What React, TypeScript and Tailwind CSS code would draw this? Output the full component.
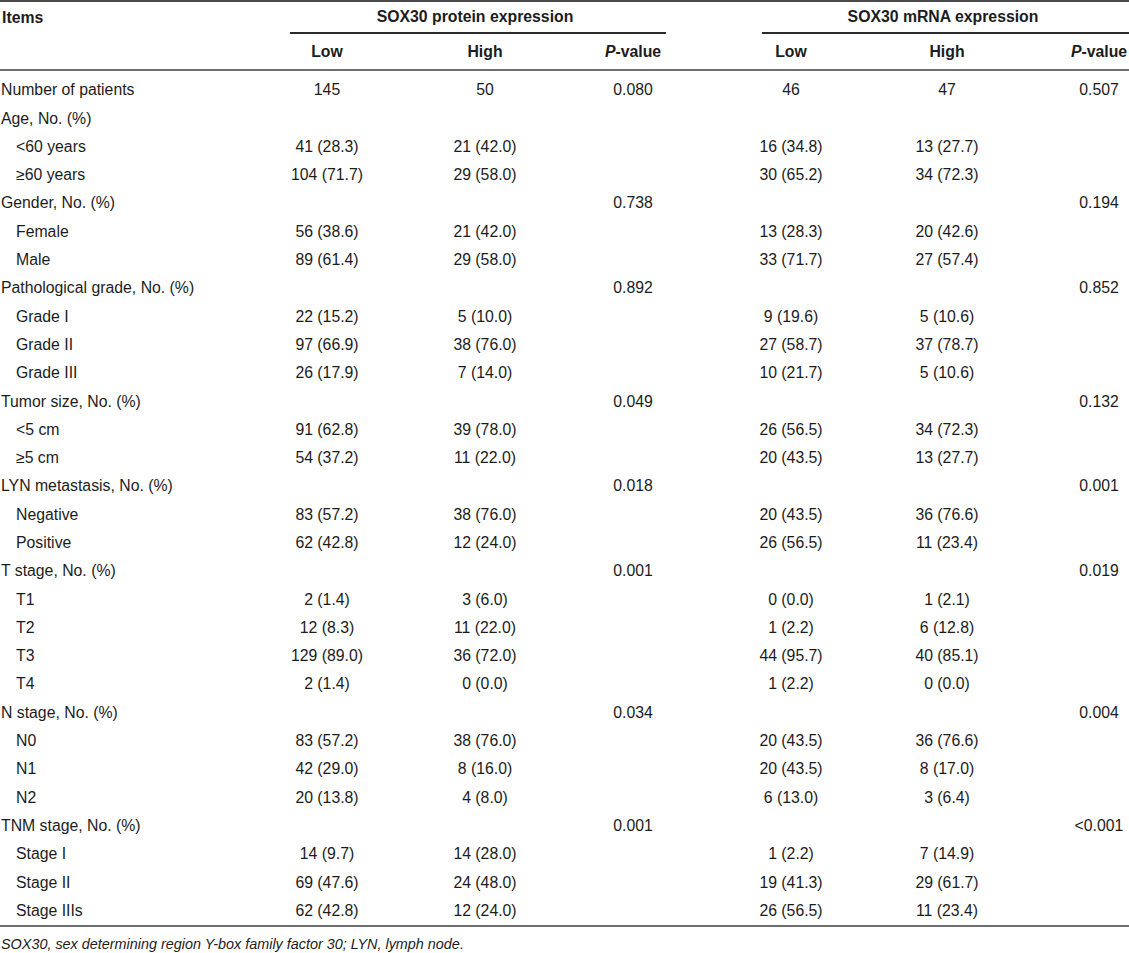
import React from 'react';

type Row = [string, string, string, string, string, string, string];

const rows: Row[] = [
  ['Number of patients', '145', '50', '0.080', '46', '47', '0.507'],
  ['Age, No. (%)', '', '', '', '', '', ''],
  ['<60 years', '41 (28.3)', '21 (42.0)', '', '16 (34.8)', '13 (27.7)', ''],
  ['≥60 years', '104 (71.7)', '29 (58.0)', '', '30 (65.2)', '34 (72.3)', ''],
  ['Gender, No. (%)', '', '', '0.738', '', '', '0.194'],
  ['Female', '56 (38.6)', '21 (42.0)', '', '13 (28.3)', '20 (42.6)', ''],
  ['Male', '89 (61.4)', '29 (58.0)', '', '33 (71.7)', '27 (57.4)', ''],
  ['Pathological grade, No. (%)', '', '', '0.892', '', '', '0.852'],
  ['Grade I', '22 (15.2)', '5 (10.0)', '', '9 (19.6)', '5 (10.6)', ''],
  ['Grade II', '97 (66.9)', '38 (76.0)', '', '27 (58.7)', '37 (78.7)', ''],
  ['Grade III', '26 (17.9)', '7 (14.0)', '', '10 (21.7)', '5 (10.6)', ''],
  ['Tumor size, No. (%)', '', '', '0.049', '', '', '0.132'],
  ['<5 cm', '91 (62.8)', '39 (78.0)', '', '26 (56.5)', '34 (72.3)', ''],
  ['≥5 cm', '54 (37.2)', '11 (22.0)', '', '20 (43.5)', '13 (27.7)', ''],
  ['LYN metastasis, No. (%)', '', '', '0.018', '', '', '0.001'],
  ['Negative', '83 (57.2)', '38 (76.0)', '', '20 (43.5)', '36 (76.6)', ''],
  ['Positive', '62 (42.8)', '12 (24.0)', '', '26 (56.5)', '11 (23.4)', ''],
  ['T stage, No. (%)', '', '', '0.001', '', '', '0.019'],
  ['T1', '2 (1.4)', '3 (6.0)', '', '0 (0.0)', '1 (2.1)', ''],
  ['T2', '12 (8.3)', '11 (22.0)', '', '1 (2.2)', '6 (12.8)', ''],
  ['T3', '129 (89.0)', '36 (72.0)', '', '44 (95.7)', '40 (85.1)', ''],
  ['T4', '2 (1.4)', '0 (0.0)', '', '1 (2.2)', '0 (0.0)', ''],
  ['N stage, No. (%)', '', '', '0.034', '', '', '0.004'],
  ['N0', '83 (57.2)', '38 (76.0)', '', '20 (43.5)', '36 (76.6)', ''],
  ['N1', '42 (29.0)', '8 (16.0)', '', '20 (43.5)', '8 (17.0)', ''],
  ['N2', '20 (13.8)', '4 (8.0)', '', '6 (13.0)', '3 (6.4)', ''],
  ['TNM stage, No. (%)', '', '', '0.001', '', '', '<0.001'],
  ['Stage I', '14 (9.7)', '14 (28.0)', '', '1 (2.2)', '7 (14.9)', ''],
  ['Stage II', '69 (47.6)', '24 (48.0)', '', '19 (41.3)', '29 (61.7)', ''],
  ['Stage IIIs', '62 (42.8)', '12 (24.0)', '', '26 (56.5)', '11 (23.4)', ''],
];

// table is wider than the window and gets clipped on the right
const cols = 'grid grid-cols-[250px_154px_162px_134px_182px_130px_174px]';

const PValue = () => (
  <span>
    <i>P</i>-value
  </span>
);

const App: React.FC = () => {
  return (
    <div className="w-[1129px] h-[953px] overflow-hidden bg-white text-[#1c1c1c] font-['Liberation_Sans',Arial,sans-serif] text-[15.8px] leading-none">
      <div className="w-[1186px]">
        <div className="h-[2px] bg-[#4a4a4a]"></div>

        {/* header */}
        <div className={cols + ' font-bold'}>
          <div className="h-[32px] flex items-center pl-[2px]">Items</div>
          <div className="col-span-3 flex flex-col">
            <div className="h-[30px] flex items-center justify-center">SOX30 protein expression</div>
            <div className="h-[2px] bg-[#2a2a2a] ml-[40px] mr-[34px]"></div>
          </div>
          <div className="col-span-3 flex flex-col">
            <div className="h-[30px] flex items-center justify-center">SOX30 mRNA expression</div>
            <div className="h-[2px] bg-[#2a2a2a] ml-[62px]"></div>
          </div>
        </div>
        <div className={cols + ' font-bold h-[35px] items-center'}>
          <div></div>
          <div className="text-center">Low</div>
          <div className="text-center">High</div>
          <div className="text-center">
            <PValue />
          </div>
          <div className="text-center">Low</div>
          <div className="text-center">High</div>
          <div className="text-center">
            <PValue />
          </div>
        </div>
        <div className="h-[2px] bg-[#6e6e6e]"></div>

        {/* body */}
        <div className="pt-[5px]">
          {rows.map((r, i) => {
            const sub = i > 0 && r[1] !== '';
            return (
              <div key={i} className={cols + ' h-[28.3px] items-center'}>
                <div className={sub ? 'pl-[16px]' : 'pl-[1px]'}>{r[0]}</div>
                <div className="text-center">{r[1]}</div>
                <div className="text-center">{r[2]}</div>
                <div className="text-center">{r[3]}</div>
                <div className="text-center">{r[4]}</div>
                <div className="text-center">{r[5]}</div>
                <div className="text-center">{r[6]}</div>
              </div>
            );
          })}
        </div>
        <div className="h-[2px] bg-[#6e6e6e]"></div>

        <p className="italic pt-[10px] pl-[1px] text-[14.4px]">
          SOX30, sex determining region Y-box family factor 30; LYN, lymph node.
        </p>
      </div>
    </div>
  );
};

export default App;
